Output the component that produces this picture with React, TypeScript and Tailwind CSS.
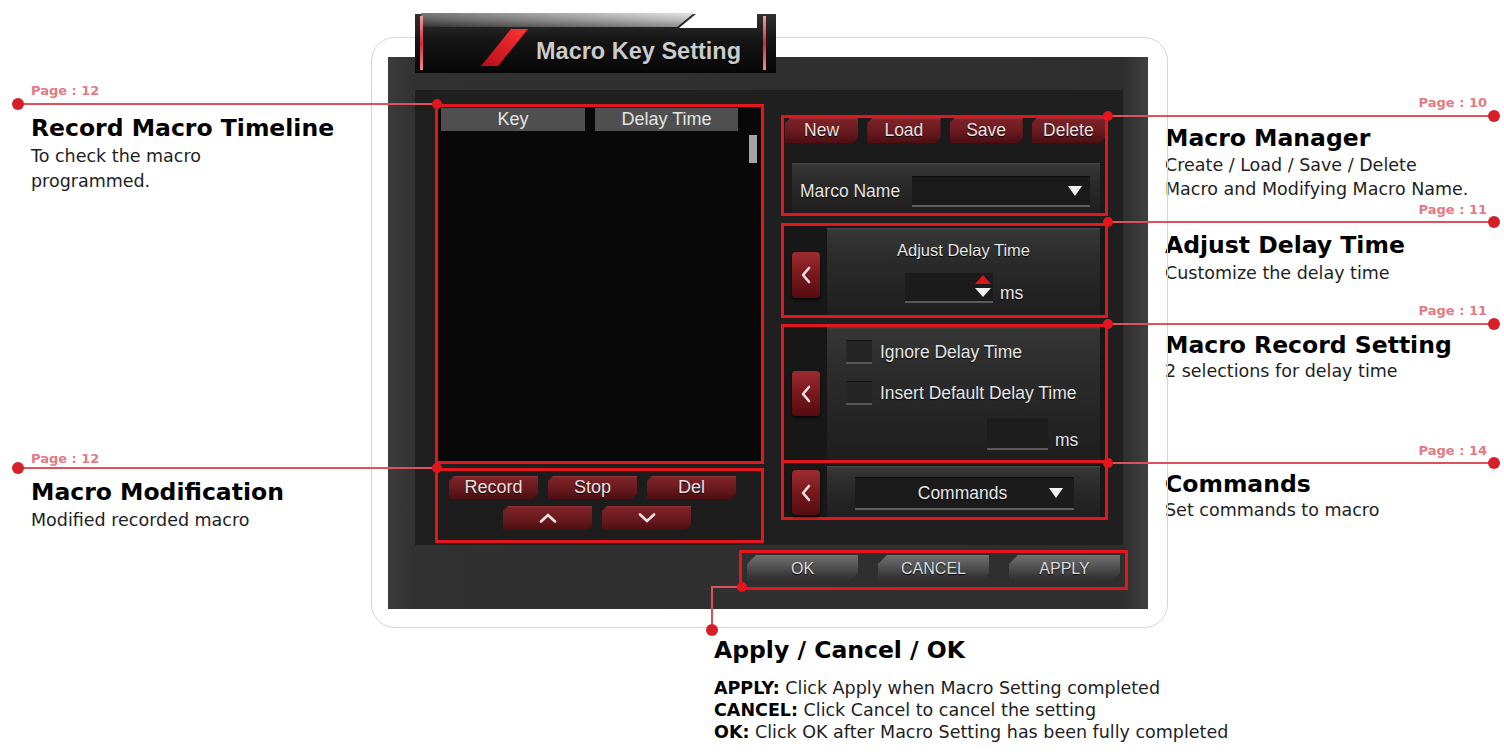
import React from "react";

const ui = "font-['Liberation_Sans',Arial,sans-serif]";
const redLine = "border-[3px] border-[#e5151d]";
const panel =
  "bg-[linear-gradient(180deg,#4a4a4a_0px,#363636_2px,#2b2b2b_35%,#1e1e1e_100%)]";
const chamferSm =
  "[clip-path:polygon(5px_0,100%_0,100%_calc(100%_-_5px),calc(100%_-_5px)_100%,0_100%,0_5px)]";
const chamferLg =
  "[clip-path:polygon(9px_0,100%_0,100%_calc(100%_-_9px),calc(100%_-_9px)_100%,0_100%,0_9px)]";

function RedButton({ className, children }: { className: string; children: React.ReactNode }) {
  return (
    <div
      className={`flex items-center justify-center ${ui} ${chamferSm} text-[#f0e0e0] [text-shadow:0_1px_1px_#000] bg-[linear-gradient(180deg,#9a3238_0%,#7a2227_8%,#6e1c21_45%,#4c0e12_100%)] ${className}`}
    >
      {children}
    </div>
  );
}

function GrayButton({ children }: { children: React.ReactNode }) {
  return (
    <div
      className={`flex h-[27px] w-[111px] items-center justify-center ${ui} ${chamferLg} text-[16px] text-[#dedede] [text-shadow:0_1px_1px_#000] bg-[linear-gradient(180deg,#707070_0%,#555555_40%,#3a3a3a_75%,#2e2e2e_100%)]`}
    >
      {children}
    </div>
  );
}

function ChevronBtn({ className }: { className: string }) {
  return (
    <div
      className={`flex w-[28px] shrink-0 items-center justify-center rounded-[4px] bg-[linear-gradient(180deg,#9c2b31_0%,#78181d_50%,#540c10_100%)] shadow-[0_2px_3px_rgba(0,0,0,0.7)] ${className}`}
    >
      <svg width="10" height="18" viewBox="0 0 10 18">
        <polyline
          points="8,2 2,9 8,16"
          fill="none"
          stroke="#f3e3e3"
          strokeWidth="2.6"
          strokeLinecap="round"
          strokeLinejoin="round"
        />
      </svg>
    </div>
  );
}

function DownTri({ fill = "#f2f2f2" }: { fill?: string }) {
  return (
    <svg width="14" height="10" viewBox="0 0 14 10">
      <polygon points="0,0 14,0 7,10" fill={fill} />
    </svg>
  );
}

function Checkbox() {
  return (
    <div className="h-[24px] w-[26px] shrink-0 border-t border-t-[#111] border-b-2 border-b-[#565656] bg-[#252525]" />
  );
}

function TitleTab() {
  return (
    <div className="absolute left-[41px] top-[-26px] z-10 h-[62px] w-[365px]">
      <svg width="365" height="62" viewBox="0 0 365 62" className="absolute inset-0">
        <defs>
          <linearGradient id="tab-body" x1="0" y1="0" x2="0" y2="1">
            <stop offset="0" stopColor="#303030" />
            <stop offset="0.45" stopColor="#151515" />
            <stop offset="1" stopColor="#060606" />
          </linearGradient>
          <linearGradient id="tab-top" x1="0" y1="0" x2="1" y2="0">
            <stop offset="0" stopColor="#4c4c4c" />
            <stop offset="0.55" stopColor="#9a9a9a" />
            <stop offset="1" stopColor="#dcdcdc" />
          </linearGradient>
          <linearGradient id="tab-shade" x1="0" y1="0" x2="0" y2="1">
            <stop offset="0" stopColor="#ffffff" stopOpacity="0.25" />
            <stop offset="1" stopColor="#000000" stopOpacity="0.35" />
          </linearGradient>
          <linearGradient id="tab-slash" x1="0" y1="1" x2="1" y2="0">
            <stop offset="0" stopColor="#b50d17" />
            <stop offset="1" stopColor="#ff3434" />
          </linearGradient>
          <linearGradient id="tab-bar" x1="0" y1="0" x2="0" y2="1">
            <stop offset="0" stopColor="#f0a0a8" />
            <stop offset="0.5" stopColor="#d8283a" />
            <stop offset="1" stopColor="#f08a96" />
          </linearGradient>
        </defs>
        <path d="M2 2 H283 L266 16 H344 V2 H363 V61 H2 Z" fill="url(#tab-body)" />
        <path d="M8 1 H281 L264 15 H8 Z" fill="url(#tab-top)" />
        <path d="M8 1 H281 L264 15 H8 Z" fill="url(#tab-shade)" />
        <polygon points="98,17 115,17 85,54 68,54" fill="url(#tab-slash)" />
        <rect x="7" y="4" width="3" height="54" fill="url(#tab-bar)" />
        <rect x="350" y="4" width="3" height="54" fill="url(#tab-bar)" />
      </svg>
      <div
        className={`relative pl-[123px] pt-[25px] ${ui} text-[23.5px] font-bold leading-[28px] text-[#cbcbcb] [text-shadow:0_1px_2px_#000]`}
      >
        Macro Key Setting
      </div>
    </div>
  );
}

function MacroList() {
  return (
    <div className="w-[329px] shrink-0">
      <div className={`flex h-[360px] flex-col ${redLine} bg-[#080808]`}>
        <div className={`mt-[1px] flex h-[23px] ${ui} text-[18px] text-[#e4e4e4]`}>
          <div className="ml-[3px] flex w-[144px] items-center justify-center bg-[#4f4f4f]">Key</div>
          <div className="ml-[10px] flex w-[143px] items-center justify-center bg-[#4f4f4f]">Delay Time</div>
        </div>
        <div className="flex justify-end pr-[4px] pt-[4px]">
          <div className="h-[28px] w-[8px] bg-[#a3a3a3]" />
        </div>
      </div>
      <div className={`mt-[4px] h-[75px] ${redLine} bg-[#1c1c1c] pl-[11px] pt-[5px]`}>
        <div className="flex gap-[10px]">
          <RedButton className="h-[23px] w-[89px] text-[18px]">Record</RedButton>
          <RedButton className="h-[23px] w-[89px] text-[18px]">Stop</RedButton>
          <RedButton className="h-[23px] w-[89px] text-[18px]">Del</RedButton>
        </div>
        <div className="ml-[54px] mt-[7px] flex gap-[10px]">
          <RedButton className="h-[24px] w-[89px]">
            <svg width="18" height="10" viewBox="0 0 18 10">
              <polyline points="2,8.5 9,2 16,8.5" fill="none" stroke="#f1e2e2" strokeWidth="2.6" strokeLinecap="round" />
            </svg>
          </RedButton>
          <RedButton className="h-[24px] w-[89px]">
            <svg width="18" height="10" viewBox="0 0 18 10">
              <polyline points="2,1.5 9,8 16,1.5" fill="none" stroke="#f1e2e2" strokeWidth="2.6" strokeLinecap="round" />
            </svg>
          </RedButton>
        </div>
      </div>
    </div>
  );
}

function SideControls() {
  const label = `${ui} text-[17.5px] text-[#e6e6e6] [text-shadow:0_1px_1px_#000]`;
  return (
    <div className="mt-[11px] w-[327px] shrink-0">
      {/* macro manager */}
      <div className={`h-[101px] ${redLine} bg-[#1a1a1a] pl-[1px]`}>
        <div className="flex gap-[9px]">
          <RedButton className="h-[25px] flex-1 text-[17.5px]">New</RedButton>
          <RedButton className="h-[25px] flex-1 text-[17.5px]">Load</RedButton>
          <RedButton className="h-[25px] flex-1 text-[17.5px]">Save</RedButton>
          <RedButton className="h-[25px] flex-1 text-[17.5px]">Delete</RedButton>
        </div>
        <div className={`ml-[7px] mt-[20px] flex h-[50px] w-[308px] items-center pl-[8px] pt-[6px] ${panel}`}>
          <span className={label}>Marco Name</span>
          <div className="ml-auto mr-[10px] flex h-[31px] w-[178px] items-center justify-end border-t border-t-[#0c0c0c] border-b-2 border-b-[#5e5e5e] bg-[#1a1a1a] pr-[8px]">
            <DownTri />
          </div>
        </div>
      </div>

      {/* delay time */}
      <div className={`mt-[7px] flex h-[95px] ${redLine} bg-[#171717] pl-[8px]`}>
        <ChevronBtn className="mt-[26px] h-[46px]" />
        <div className={`ml-[7px] mt-[2px] h-[87px] w-[273px] ${panel}`}>
          <div className={`pt-[12px] text-center ${ui} text-[16.5px] leading-[20px] text-[#e6e6e6] [text-shadow:0_1px_1px_#000]`}>
            Adjust Delay Time
          </div>
          <div className="ml-[78px] mt-[13px] flex items-end">
            <div className="flex h-[30px] w-[88px] flex-col items-end gap-[4px] border-b-2 border-b-[#5a5a5a] bg-[#1b1b1b] pr-[2px] pt-[2px]">
              <svg width="16" height="9" viewBox="0 0 16 9">
                <polygon points="0,9 16,9 8,0" fill="#e0141c" />
              </svg>
              <svg width="16" height="9" viewBox="0 0 16 9">
                <polygon points="0,0 16,0 8,9" fill="#f2f2f2" />
              </svg>
            </div>
            <span className={`ml-[7px] leading-[20px] ${label}`}>ms</span>
          </div>
        </div>
      </div>

      {/* record setting */}
      <div className={`mt-[6px] flex h-[139px] items-center ${redLine} bg-[#171717] pl-[8px]`}>
        <ChevronBtn className="h-[45px]" />
        <div className={`ml-[7px] w-[273px] self-stretch pl-[19px] pt-[12px] ${panel}`}>
          <div className="flex items-center gap-[8px]">
            <Checkbox />
            <span className={label}>Ignore Delay Time</span>
          </div>
          <div className="mt-[15px] flex items-center gap-[8px]">
            <Checkbox />
            <span className={label}>Insert Default Delay Time</span>
          </div>
          <div className="ml-[141px] mt-[11px] flex items-end">
            <div className="h-[32px] w-[61px] border-b-2 border-b-[#5a5a5a] bg-[#1c1c1c]" />
            <span className={`ml-[7px] leading-[20px] ${label}`}>ms</span>
          </div>
        </div>
      </div>

      {/* commands */}
      <div className={`flex h-[57px] ${redLine} border-t-0 bg-[#171717] pl-[8px]`}>
        <ChevronBtn className="mt-[7px] h-[45px]" />
        <div className={`ml-[7px] mt-[3px] h-[51px] w-[273px] pl-[28px] pt-[11px] ${panel}`}>
          <div className="relative flex h-[33px] w-[219px] items-center justify-center border-t border-t-[#0c0c0c] border-b-2 border-b-[#5e5e5e] bg-[#1b1b1b] pr-[4px]">
            <span className={label}>Commands</span>
            <div className="absolute right-[11px] top-[10px] flex">
              <DownTri />
            </div>
          </div>
        </div>
      </div>
    </div>
  );
}

function MacroWindow() {
  return (
    <div className="relative mt-[37px] h-[591px] rounded-[24px] border border-[#d6d6d6] pl-[16px] pt-[19px]">
      <TitleTab />
      <div className="h-[552px] w-[760px] bg-[linear-gradient(90deg,#3c3c3c_0px,#313131_27px,#2e2e2e_735px,#404040_760px)] pl-[27px] pt-[33px]">
        <div className="flex h-[455px] w-[708px] gap-[17px] bg-[#1f1f1f] pl-[20px] pt-[14px]">
          <MacroList />
          <SideControls />
        </div>
        <div className={`ml-[324px] mt-[5px] flex h-[40px] w-[389px] gap-[20px] ${redLine} pl-[5px] pt-[2px]`}>
          <GrayButton>OK</GrayButton>
          <GrayButton>CANCEL</GrayButton>
          <GrayButton>APPLY</GrayButton>
        </div>
      </div>
    </div>
  );
}

const pageTag = "text-[13px] leading-[16px] font-bold text-[#e47a86]";
const noteTitle = "text-[23.5px] leading-[28px] font-bold text-black whitespace-nowrap";
const noteText = "text-[17.5px] text-[#1e1e1e] whitespace-nowrap";

function LeftNotes() {
  return (
    <div className="w-[371px] shrink-0 pl-[31px]">
      <div className={`pt-[83px] ${pageTag}`}>Page : 12</div>
      <div className={`mt-[15px] ${noteTitle}`}>Record Macro Timeline</div>
      <div className={`mt-[2px] leading-[25px] ${noteText}`}>
        To check the macro
        <br />
        programmed.
      </div>
      <div className={`mt-[257px] ${pageTag}`}>Page : 12</div>
      <div className={`mt-[11px] ${noteTitle}`}>Macro Modification</div>
      <div className={`mt-[2px] leading-[25px] ${noteText}`}>Modified recorded macro</div>
    </div>
  );
}

function RightNotes() {
  return (
    <div className="-ml-[3px] flex-1 pr-[17px]">
      <div className={`pt-[95px] text-right ${pageTag}`}>Page : 10</div>
      <div className={`mt-[13px] ${noteTitle}`}>Macro Manager</div>
      <div className={`mt-[1px] leading-[24px] ${noteText}`}>
        Create / Load / Save / Delete
        <br />
        Macro and Modifying Macro Name.
      </div>
      <div className={`mt-[1px] text-right ${pageTag}`}>Page : 11</div>
      <div className={`mt-[13px] ${noteTitle}`}>Adjust Delay Time</div>
      <div className={`mt-[2px] leading-[24px] ${noteText}`}>Customize the delay time</div>
      <div className={`mt-[18px] text-right ${pageTag}`}>Page : 11</div>
      <div className={`mt-[12px] ${noteTitle}`}>Macro Record Setting</div>
      <div className={`leading-[24px] ${noteText}`}>2 selections for delay time</div>
      <div className={`mt-[60px] text-right ${pageTag}`}>Page : 14</div>
      <div className={`mt-[11px] ${noteTitle}`}>Commands</div>
      <div className={`leading-[24px] ${noteText}`}>Set commands to macro</div>
    </div>
  );
}

function BottomNote() {
  return (
    <div className="pl-[343px]">
      <div className={`mt-[8px] ${noteTitle}`}>Apply / Cancel / OK</div>
      <div className="mt-[13px] whitespace-nowrap text-[17.5px] leading-[22px] text-[#1e1e1e]">
        <div>
          <b className="text-black">APPLY:</b> Click Apply when Macro Setting completed
        </div>
        <div>
          <b className="text-black">CANCEL:</b> Click Cancel to cancel the setting
        </div>
        <div>
          <b className="text-black">OK:</b> Click OK after Macro Setting has been fully completed
        </div>
      </div>
    </div>
  );
}

/* leader lines tying each note to its part of the window */
function Callouts() {
  const line = "absolute bg-[#d9525c]";
  const endDot = "absolute h-[12px] w-[12px] rounded-full bg-[#d71f2a]";
  const boxDot = "absolute h-[10px] w-[10px] rounded-full bg-[#e5151d]";
  return (
    <div className="pointer-events-none absolute inset-0">
      <div className={`${line} left-[18px] top-[103px] h-[2px] w-[419px]`} />
      <div className={`${endDot} left-[12px] top-[98px]`} />
      <div className={`${boxDot} left-[432px] top-[99px]`} />

      <div className={`${line} left-[18px] top-[467px] h-[2px] w-[419px]`} />
      <div className={`${endDot} left-[12px] top-[462px]`} />
      <div className={`${boxDot} left-[432px] top-[463px]`} />

      <div className={`${line} left-[1108px] top-[115px] h-[2px] w-[386px]`} />
      <div className={`${boxDot} left-[1103px] top-[111px]`} />
      <div className={`${endDot} left-[1488px] top-[110px]`} />

      <div className={`${line} left-[1108px] top-[221px] h-[2px] w-[386px]`} />
      <div className={`${boxDot} left-[1103px] top-[217px]`} />
      <div className={`${endDot} left-[1488px] top-[216px]`} />

      <div className={`${line} left-[1108px] top-[323px] h-[2px] w-[386px]`} />
      <div className={`${boxDot} left-[1103px] top-[319px]`} />
      <div className={`${endDot} left-[1488px] top-[318px]`} />

      <div className={`${line} left-[1108px] top-[462px] h-[2px] w-[386px]`} />
      <div className={`${boxDot} left-[1103px] top-[458px]`} />
      <div className={`${endDot} left-[1488px] top-[457px]`} />

      <div className={`${line} left-[712px] top-[586px] h-[2px] w-[30px]`} />
      <div className={`${line} left-[711px] top-[586px] h-[44px] w-[2px]`} />
      <div className={`${boxDot} left-[737px] top-[582px]`} />
      <div className={`${endDot} left-[706px] top-[624px]`} />
    </div>
  );
}

export default function App() {
  return (
    <div className="relative h-[754px] w-[1504px] overflow-hidden bg-white font-['DejaVu_Sans',sans-serif] text-black">
      <div className="flex">
        <LeftNotes />
        <div className="w-[797px] shrink-0">
          <MacroWindow />
          <BottomNote />
        </div>
        <RightNotes />
      </div>
      <Callouts />
    </div>
  );
}
